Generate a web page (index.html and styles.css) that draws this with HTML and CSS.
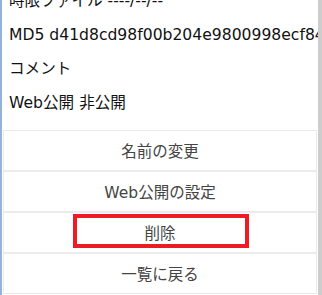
FILE: index.html
```html
<!DOCTYPE html>
<html lang="ja">

<head>
    <meta charset="UTF-8">
    <meta name="viewport" content="width=device-width, initial-scale=1.0">
    <title>ファイル詳細</title>
    <link rel="stylesheet" href="styles.css">
</head>

<body>
    <div class="frame">
        <div class="content">
            <ul class="info">
                <li>時限ファイル ----/--/--</li>
                <li>MD5 d41d8cd98f00b204e9800998ecf8427e</li>
                <li>コメント</li>
                <li>Web公開 非公開</li>
            </ul>
            <div class="actions">
                <button class="action-btn">名前の変更</button>
                <button class="action-btn">Web公開の設定</button>
                <button class="action-btn marked">削除</button>
                <button class="action-btn">一覧に戻る</button>
            </div>
        </div>
        <div class="scrollbar"></div>
    </div>
</body>

</html>
```

FILE: styles.css
```css
body {
    margin: 0;
    padding: 0;
    background-color: #fff;
    font-family: "DejaVu Sans", "Noto Sans CJK JP", sans-serif;
    overflow: hidden;
}

.frame {
    display: flex;
    height: 295px;
    border-left: 2px solid #93b3d9;
}

.content {
    flex: 1;
    padding-left: 1px;
    padding-right: 1px;
    overflow: hidden;
}

.scrollbar {
    width: 4px;
    background-color: #cdcdcd;
}

.info {
    list-style: none;
    margin: -16px 0 0 0;
    padding: 0 0 0 6px;
}

.info li {
    height: 34px;
    line-height: 34px;
    font-size: 15.6px;
    color: #111;
    white-space: nowrap;
}

.actions {
    margin-top: 10px;
}

.action-btn {
    display: block;
    position: relative;
    width: 100%;
    height: 41px;
    margin: 0;
    padding: 0 0 1px 0;
    background-color: #fff;
    border: 1px solid #ebebeb;
    font-family: "DejaVu Sans", "Noto Sans CJK JP", sans-serif;
    font-size: 15.5px;
    color: #444;
    cursor: pointer;
}

.marked::after {
    content: "";
    position: absolute;
    left: 69px;
    top: 1px;
    width: 168px;
    height: 26px;
    border: 4px solid #ed1c24;
}
```
